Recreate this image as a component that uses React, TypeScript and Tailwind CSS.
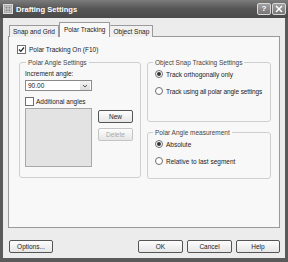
import React from "react";

function Check({ checked }: { checked?: boolean }) {
  return (
    <span className="w-[9px] h-[9px] border border-[#6f6f6f] bg-white flex items-center justify-center shrink-0">
      {checked && (
        <svg width="7" height="7" viewBox="0 0 7 7">
          <path d="M1 3.5 L2.8 5.3 L6 1.5" stroke="#222" strokeWidth="1.2" fill="none" />
        </svg>
      )}
    </span>
  );
}

function Radio({ checked }: { checked?: boolean }) {
  return (
    <span className="w-[8px] h-[8px] rounded-full border border-[#6f6f6f] bg-white flex items-center justify-center shrink-0">
      {checked && <span className="w-[4px] h-[4px] rounded-full bg-[#333]" />}
    </span>
  );
}

function Btn({ children, className = "", disabled }: { children: React.ReactNode; className?: string; disabled?: boolean }) {
  return (
    <div
      className={
        "h-[13px] rounded-[2px] border flex items-center justify-center bg-gradient-to-b from-[#fdfdfd] to-[#e6e6e6] " +
        (disabled ? "border-[#c4c4c4] text-[#a8a8a8] " : "border-[#555] text-[#222] ") +
        className
      }
    >
      {children}
    </div>
  );
}

export default function App() {
  return (
    <div className="w-[288px] h-[262px] bg-[#5a5a5a] flex flex-col font-['Liberation_Sans',Arial,sans-serif] text-[6.5px] leading-[7px] text-[#222] whitespace-nowrap">
      {/* Title bar */}
      <div className="h-[18px] flex items-center pl-[3px] pr-[2px] bg-gradient-to-b from-[#7c7c7c] via-[#555] to-[#4a4a4a]">
        <div className="w-[10px] h-[10px] border border-[#ddd] bg-[#888] flex items-center justify-center">
          <svg width="8" height="8" viewBox="0 0 8 8">
            <rect x="1" y="1" width="6" height="6" fill="none" stroke="#eee" strokeWidth="0.8" />
            <path d="M1 4 H7 M4 1 V7" stroke="#eee" strokeWidth="0.6" />
          </svg>
        </div>
        <span className="ml-[3px] text-white font-bold text-[7.6px] leading-[9px]">Drafting Settings</span>
        <div className="flex-1" />
        <div className="w-[14px] h-[12px] rounded-[2px] border border-[#d8d8d8] bg-gradient-to-b from-[#a0a0a0] to-[#777] flex items-center justify-center text-white font-bold text-[8px] leading-[8px]">
          ?
        </div>
        <div className="ml-[1px] w-[14px] h-[12px] rounded-[2px] border border-[#d8d8d8] bg-gradient-to-b from-[#a0a0a0] to-[#777] flex items-center justify-center">
          <svg width="8" height="8" viewBox="0 0 8 8">
            <path d="M1 1 L7 7 M7 1 L1 7" stroke="white" strokeWidth="1.5" />
          </svg>
        </div>
      </div>

      {/* Body */}
      <div className="flex-1 mx-[3px] mb-[4px] bg-[#ececec] flex flex-col">
        {/* Tabs */}
        <div className="h-[19px] flex items-end pl-[6px] relative z-10 -mb-[1px]">
          <div className="h-[12px] px-[3px] border border-b-0 border-[#9a9a9a] bg-[#f0f0f0] flex items-center rounded-t-[1px]">Snap and Grid</div>
          <div className="h-[15px] px-[4px] border border-b-0 border-[#9a9a9a] bg-[#f8f8f8] flex items-center pb-[2px] rounded-t-[1px]">Polar Tracking</div>
          <div className="h-[12px] px-[3px] border border-b-0 border-l-0 border-[#9a9a9a] bg-[#f0f0f0] flex items-center rounded-t-[1px]">Object Snap</div>
        </div>

        {/* Panel */}
        <div className="mx-[5px] h-[192px] border border-[#9a9a9a] bg-[#f8f8f8] pl-[8px] pt-[8px] flex flex-col">
          <div className="flex items-center gap-[3px]">
            <Check checked />
            <span>Polar Tracking On (F10)</span>
          </div>

          <div className="flex gap-[6px] ml-[2px] mt-[5px]">
            {/* Left group */}
            <fieldset className="w-[122px] h-[119px] border border-[#cfcfcf] rounded-[3px] px-[5px]">
              <legend className="px-[2px] ml-[1px] text-[#444]">Polar Angle Settings</legend>
              <div className="mt-[4px]">Increment angle:</div>
              <div className="mt-[3px] w-[67px] h-[11px] border border-[#8a8a8a] bg-white flex items-center">
                <span className="flex-1 pl-[2px]">90.00</span>
                <span className="w-[10px] h-[9px] mr-[1px] bg-gradient-to-b from-[#f2f2f2] to-[#dcdcdc] flex items-center justify-center">
                  <svg width="6" height="4" viewBox="0 0 6 4">
                    <path d="M1 1 L3 3 L5 1" stroke="#555" strokeWidth="1" fill="none" />
                  </svg>
                </span>
              </div>
              <div className="mt-[6px] flex items-center gap-[2px]">
                <Check />
                <span>Additional angles</span>
              </div>
              <div className="flex mt-[2px]">
                <div className="w-[67px] h-[59px] border border-[#a8a8a8] bg-[#e3e3e3]" />
                <div className="ml-[6px] mt-[2px] flex flex-col gap-[5px]">
                  <Btn className="w-[35px]">New</Btn>
                  <Btn className="w-[35px]" disabled>Delete</Btn>
                </div>
              </div>
            </fieldset>

            {/* Right groups */}
            <div className="flex flex-col gap-[7px]">
              <fieldset className="w-[124px] h-[63px] border border-[#cfcfcf] rounded-[3px] px-[7px]">
                <legend className="px-[2px] ml-[-2px] text-[#444]">Object Snap Tracking Settings</legend>
                <div className="mt-[4px] flex items-center gap-[3px]">
                  <Radio checked />
                  <span>Track orthogonally only</span>
                </div>
                <div className="mt-[9px] flex items-center gap-[3px]">
                  <Radio />
                  <span className="tracking-[-0.1px]">Track using all polar angle settings</span>
                </div>
              </fieldset>
              <fieldset className="w-[124px] h-[50px] border border-[#cfcfcf] rounded-[3px] px-[7px]">
                <legend className="px-[2px] ml-[-2px] text-[#444]">Polar Angle measurement</legend>
                <div className="mt-[4px] flex items-center gap-[3px]">
                  <Radio checked />
                  <span>Absolute</span>
                </div>
                <div className="mt-[9px] flex items-center gap-[3px]">
                  <Radio />
                  <span>Relative to last segment</span>
                </div>
              </fieldset>
            </div>
          </div>
        </div>

        {/* Footer buttons */}
        <div className="flex mt-[12px] pl-[6px] pr-[5px]">
          <Btn className="w-[44px]">Options...</Btn>
          <div className="flex-1" />
          <div className="flex gap-[4px]">
            <Btn className="w-[45px]">OK</Btn>
            <Btn className="w-[45px]">Cancel</Btn>
            <Btn className="w-[44px]">Help</Btn>
          </div>
        </div>
      </div>
    </div>
  );
}
